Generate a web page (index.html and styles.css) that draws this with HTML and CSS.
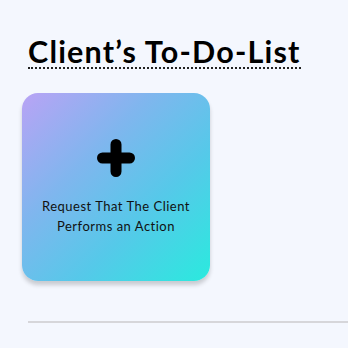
FILE: index.html
```html
<!DOCTYPE html>
<html>
<head>
<meta charset="utf-8">
<link rel="stylesheet" href="styles.css">
</head>
<body>
<main class="page">
  <h1 class="title">Client’s To-Do-List</h1>
  <div class="cards">
    <button class="card">
      <svg class="plus" width="38" height="38" viewBox="0 0 38 38" aria-hidden="true">
        <path d="M19 5.5 V32.5 M5.5 19 H32.5" stroke="#000" stroke-width="11" stroke-linecap="round"/>
      </svg>
      <span class="card-text">Request That The Client Performs an Action</span>
    </button>
  </div>
  <hr class="divider">
</main>
</body>
</html>
```
FILE: styles.css
```css
html, body {
  margin: 0;
  padding: 0;
  background: #f4f7fe;
  font-family: Lato, "Noto Sans", sans-serif;
  color: #000;
}
.page {
  padding: 36px 0 0 28px;
  display: flex;
  flex-direction: column;
}
.title {
  margin: 0;
  font-size: 30.5px;
  font-weight: 700;
  letter-spacing: 1.2px;
  line-height: 31px;
  align-self: flex-start;
  border-bottom: 2px dotted #222;
  padding-bottom: 0;
}
.cards {
  display: flex;
  margin: 24px 0 0 -6px;
}
.card {
  width: 188px;
  height: 188px;
  border: none;
  border-radius: 16px;
  background: linear-gradient(135deg, #b9a3f5 0%, #7fb6ee 35%, #55c9e9 65%, #2aeade 100%);
  box-shadow: 0 4px 4px rgba(0,0,0,0.18);
  display: flex;
  flex-direction: column;
  align-items: center;
  padding: 46px 6px 0;
  font-family: inherit;
}
.plus {
  display: block;
}
.card-text {
  margin-top: 19px;
  font-size: 13px;
  letter-spacing: 0.5px;
  line-height: 20px;
  color: #111;
  text-align: center;
  width: 176px;
}
.divider {
  margin: 40px 0 0;
  border: none;
  height: 2px;
  background: #d6d6da;
}
```
